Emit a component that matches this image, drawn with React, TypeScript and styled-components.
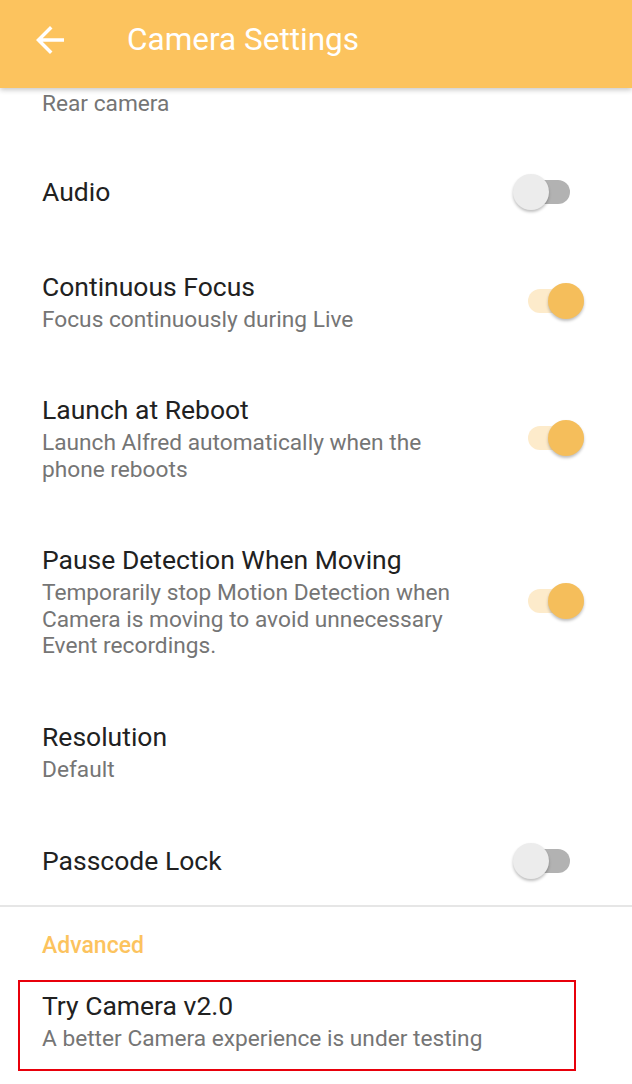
import React, { useState } from 'react';
import styled, { createGlobalStyle } from 'styled-components';

const GlobalStyle = createGlobalStyle`
    html, body {
        margin: 0;
        padding: 0;
        background: #ffffff;
    }
    body {
        font-family: Roboto, 'Noto Sans', sans-serif;
    }
`;

type Setting = {
    title: string;
    subtitle?: string;
    toggle?: boolean;
};

const settings: Setting[] = [
    { title: 'Audio', toggle: false },
    { title: 'Continuous Focus', subtitle: 'Focus continuously during Live', toggle: true },
    { title: 'Launch at Reboot', subtitle: 'Launch Alfred automatically when the phone reboots', toggle: true },
    { title: 'Pause Detection When Moving', subtitle: 'Temporarily stop Motion Detection when Camera is moving to avoid unnecessary Event recordings.', toggle: true },
    { title: 'Resolution', subtitle: 'Default' },
    { title: 'Passcode Lock', toggle: false },
];

function Toggle({ initial }: { initial: boolean }) {
    const [on, setOn] = useState(initial);
    return (
        <SwitchBox on={on} onClick={() => setOn(!on)}>
            <Track on={on} />
            <Thumb on={on} />
        </SwitchBox>
    );
}

export default function App() {
    return (
        <>
            <GlobalStyle />
            <Screen>
                <AppBar>
                    <BackButton aria-label="Back">
                        <svg width="42" height="42" viewBox="0 0 24 24" fill="#ffffff">
                            <path d="M20 11H7.83l5.59-5.59L12 4l-8 8 8 8 1.41-1.41L7.83 13H20v-2z" />
                        </svg>
                    </BackButton>
                    <BarTitle>Camera Settings</BarTitle>
                </AppBar>
                <List>
                    <Clipped>
                        <Subtitle>Rear camera</Subtitle>
                    </Clipped>
                    {settings.map((s) => (
                        <Row key={s.title}>
                            <Texts>
                                <Title>{s.title}</Title>
                                {s.subtitle && <Subtitle>{s.subtitle}</Subtitle>}
                            </Texts>
                            {s.toggle !== undefined && <Toggle initial={s.toggle} />}
                        </Row>
                    ))}
                    <Divider />
                    <SectionLabel>Advanced</SectionLabel>
                    <HighlightRow>
                        <Texts wide>
                            <Title>Try Camera v2.0</Title>
                            <Subtitle>A better Camera experience is under testing</Subtitle>
                        </Texts>
                    </HighlightRow>
                </List>
            </Screen>
        </>
    );
}

const Screen = styled.div`
    width: 632px;
    height: 1084px;
    overflow: hidden;
    position: relative;
    background: #ffffff;
`;

const AppBar = styled.header`
    height: 88px;
    background: #fcc35e;
    display: flex;
    align-items: center;
    padding-left: 29px;
    padding-bottom: 9px;
    box-sizing: border-box;
    box-shadow: 0 2px 5px rgba(0, 0, 0, 0.22);
    position: relative;
    z-index: 2;
`;

const BackButton = styled.div`
    width: 42px;
    height: 42px;
    display: flex;
    cursor: pointer;
`;

const BarTitle = styled.h1`
    margin: 0 0 0 56px;
    font-family: Roboto, sans-serif;
    font-weight: 400;
    font-size: 31.5px;
    color: #ffffff;
`;

const List = styled.main`
    display: flex;
    flex-direction: column;
`;

const Clipped = styled.div`
    padding: 0 42px 26px;
`;

const Row = styled.div`
    display: flex;
    align-items: center;
    justify-content: space-between;
    padding: 30px 0 30px 42px;
`;

const Texts = styled.div<{ wide?: boolean }>`
    display: flex;
    flex-direction: column;
    max-width: ${(p) => (p.wide ? 'none' : '430px')};
`;

const Title = styled.div`
    font-size: 26.5px;
    line-height: 34px;
    color: #212121;
`;

const Subtitle = styled.div`
    font-size: 22.7px;
    line-height: 26.5px;
    color: #757575;
    margin-top: 3px;
`;

const SwitchBox = styled.div<{ on: boolean }>`
    position: relative;
    width: 57px;
    height: 36px;
    margin-right: ${(p) => (p.on ? '48px' : '62px')};
    flex-shrink: 0;
    cursor: pointer;
`;

const Track = styled.div<{ on: boolean }>`
    position: absolute;
    left: 1px;
    right: 0;
    top: 6px;
    height: 24px;
    border-radius: 12px;
    background: ${(p) => (p.on ? '#fdebcb' : '#b2b2b2')};
`;

const Thumb = styled.div<{ on: boolean }>`
    position: absolute;
    top: 0;
    left: ${(p) => (p.on ? '21px' : '0')};
    width: 36px;
    height: 36px;
    border-radius: 50%;
    background: ${(p) => (p.on ? '#f5be5b' : '#ececec')};
    box-shadow: 0 2px 3px rgba(0, 0, 0, 0.25);
`;

const Divider = styled.hr`
    margin: -4px 0 0;
    border: none;
    border-top: 2px solid #e6e6e6;
`;

const SectionLabel = styled.div`
    padding: 24px 42px 0;
    font-size: 23px;
    line-height: 30px;
    font-weight: 500;
    color: #fcc35e;
`;

const HighlightRow = styled.div`
    margin: 19px 0 0 18px;
    width: 558px;
    box-sizing: border-box;
    border: 2px solid #e8000b;
    padding: 7px 0 16px 22px;
`;
